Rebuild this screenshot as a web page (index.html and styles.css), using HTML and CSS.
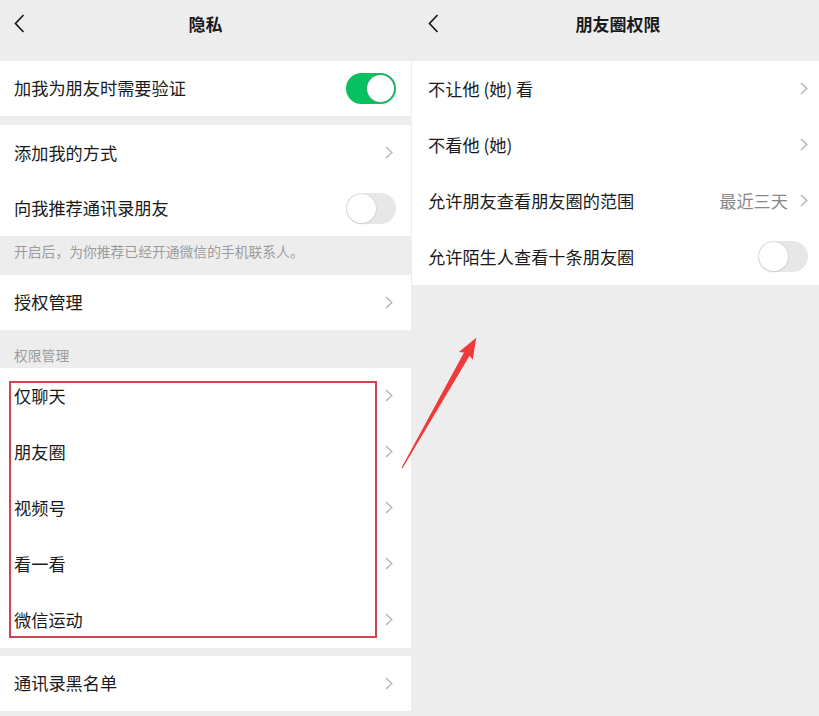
FILE: index.html
```html
<!DOCTYPE html>
<html lang="zh-CN">
<head>
<meta charset="utf-8">
<title>隐私 / 朋友圈权限</title>
<link rel="stylesheet" href="styles.css">
</head>
<body>
<div class="page">
  <section class="panel panel-left">
    <header class="header">
      <svg class="back" viewBox="0 0 11 19" width="11" height="19"><polyline points="9.5,1 1.5,9.5 9.5,18" fill="none" stroke="#1a1a1a" stroke-width="1.7"/></svg>
      <h1 class="title">隐私</h1>
    </header>

    <div class="group g1">
      <div class="row r55"><span class="label">加我为朋友时需要验证</span><span class="switch on"><span class="knob"></span></span></div>
    </div>

    <div class="group g2">
      <div class="row"><span class="label">添加我的方式</span><svg class="chev" viewBox="0 0 8 13" width="8" height="13"><polyline points="1,1 6.8,6.5 1,12" fill="none" stroke="#b5b5b5" stroke-width="1.4"/></svg></div>
      <div class="row r55"><span class="label">向我推荐通讯录朋友</span><span class="switch"><span class="knob"></span></span></div>
    </div>

    <p class="hint">开启后，为你推荐已经开通微信的手机联系人。</p>

    <div class="group">
      <div class="row r55"><span class="label">授权管理</span><svg class="chev" viewBox="0 0 8 13" width="8" height="13"><polyline points="1,1 6.8,6.5 1,12" fill="none" stroke="#b5b5b5" stroke-width="1.4"/></svg></div>
    </div>

    <p class="section-title">权限管理</p>

    <div class="group g4">
      <div class="row"><span class="label">仅聊天</span><svg class="chev" viewBox="0 0 8 13" width="8" height="13"><polyline points="1,1 6.8,6.5 1,12" fill="none" stroke="#b5b5b5" stroke-width="1.4"/></svg></div>
      <div class="row"><span class="label">朋友圈</span><svg class="chev" viewBox="0 0 8 13" width="8" height="13"><polyline points="1,1 6.8,6.5 1,12" fill="none" stroke="#b5b5b5" stroke-width="1.4"/></svg></div>
      <div class="row"><span class="label">视频号</span><svg class="chev" viewBox="0 0 8 13" width="8" height="13"><polyline points="1,1 6.8,6.5 1,12" fill="none" stroke="#b5b5b5" stroke-width="1.4"/></svg></div>
      <div class="row"><span class="label">看一看</span><svg class="chev" viewBox="0 0 8 13" width="8" height="13"><polyline points="1,1 6.8,6.5 1,12" fill="none" stroke="#b5b5b5" stroke-width="1.4"/></svg></div>
      <div class="row"><span class="label">微信运动</span><svg class="chev" viewBox="0 0 8 13" width="8" height="13"><polyline points="1,1 6.8,6.5 1,12" fill="none" stroke="#b5b5b5" stroke-width="1.4"/></svg></div>
      <div class="highlight"></div>
    </div>

    <div class="group g5">
      <div class="row r55"><span class="label">通讯录黑名单</span><svg class="chev" viewBox="0 0 8 13" width="8" height="13"><polyline points="1,1 6.8,6.5 1,12" fill="none" stroke="#b5b5b5" stroke-width="1.4"/></svg></div>
    </div>
  </section>

  <section class="panel panel-right">
    <header class="header">
      <svg class="back" viewBox="0 0 11 19" width="11" height="19"><polyline points="9.5,1 1.5,9.5 9.5,18" fill="none" stroke="#1a1a1a" stroke-width="1.7"/></svg>
      <h1 class="title">朋友圈权限</h1>
    </header>
    <div class="group g1">
      <div class="row"><span class="label">不让他 (她) 看</span><svg class="chev" viewBox="0 0 8 13" width="8" height="13"><polyline points="1,1 6.8,6.5 1,12" fill="none" stroke="#b5b5b5" stroke-width="1.4"/></svg></div>
      <div class="row"><span class="label">不看他 (她)</span><svg class="chev" viewBox="0 0 8 13" width="8" height="13"><polyline points="1,1 6.8,6.5 1,12" fill="none" stroke="#b5b5b5" stroke-width="1.4"/></svg></div>
      <div class="row"><span class="label">允许朋友查看朋友圈的范围</span><span class="value">最近三天</span><svg class="chev" viewBox="0 0 8 13" width="8" height="13"><polyline points="1,1 6.8,6.5 1,12" fill="none" stroke="#b5b5b5" stroke-width="1.4"/></svg></div>
      <div class="row"><span class="label">允许陌生人查看十条朋友圈</span><span class="switch"><span class="knob"></span></span></div>
    </div>
  </section>

  <svg class="arrow" viewBox="0 0 819 716" width="819" height="716">
    <g transform="translate(402,468) rotate(-60.35)">
      <polygon points="0,-0.6 131,-3.2 129,-8 150,0 129,8 131,3.2 0,0.6" fill="#ee3a3a"/>
    </g>
  </svg>
</div>
</body>
</html>
```

FILE: styles.css
```css
* { box-sizing: border-box; }
html, body { margin: 0; padding: 0; }
body {
  background: #ededed;
  font-family: "Noto Sans CJK SC", "Noto Sans", sans-serif;
  color: #1a1a1a;
  width: 819px;
  height: 716px;
  overflow: hidden;
}
.page {
  position: relative;
  display: flex;
  width: 819px;
  height: 716px;
}
.panel {
  display: flex;
  flex-direction: column;
  background: #ededed;
}
.panel-left { width: 411px; }
.panel-right { flex: 1; margin-left: 1px; }

.header {
  height: 61px;
  display: flex;
  align-items: flex-start;
  justify-content: center;
  position: relative;
}
.back {
  position: absolute;
  left: 14px;
  top: 14px;
}
.panel-right .back { left: 16px; }
.title {
  margin: 0;
  padding-top: 12px;
  font-size: 17px;
  font-weight: 700;
  line-height: 24px;
}
.panel-right .title { padding-left: 5px; }

.group {
  background: #fff;
  position: relative;
}
.row {
  height: 56px;
  display: flex;
  align-items: center;
  padding: 0 18px 1px 14px;
  font-size: 17.2px;
}
.row.r55 { height: 55px; }
.label { flex: 1; line-height: 24px; }
.chev { flex: none; }
.row .switch { margin-right: -3px; }

.panel-right .row { padding: 0 11px 1px 16px; }
.panel-right .row .switch { margin-right: 0; }
.value {
  color: #888;
  margin-right: 12px;
}

.g2 { margin-top: 9px; }
.g5 { margin-top: 8px; }

.hint {
  margin: 0;
  height: 39px;
  padding: 3px 14px 0;
  font-size: 13.8px;
  line-height: 24px;
  color: #9c9c9c;
}
.section-title {
  margin: 0;
  height: 38px;
  padding: 13px 14px 0;
  font-size: 13.8px;
  line-height: 24px;
  color: #9c9c9c;
}

.switch {
  flex: none;
  width: 50px;
  height: 31px;
  border-radius: 16px;
  background: #e7e7e7;
  position: relative;
}
.switch .knob {
  position: absolute;
  top: 1px;
  left: 1px;
  width: 29px;
  height: 29px;
  border-radius: 50%;
  background: #fff;
  box-shadow: 0 0 0 0.6px #d3d3d3, 0 1px 2px rgba(0,0,0,0.12);
}
.switch.on { background: #07c160; }
.switch.on .knob {
  left: auto;
  right: 2px;
  top: 2px;
  width: 27px;
  height: 27px;
  box-shadow: 0 0 0 0.6px #4a9a70;
}

.highlight {
  position: absolute;
  left: 9px;
  top: 13px;
  width: 368px;
  height: 257px;
  border: 2.5px solid #d3434d;
  pointer-events: none;
}

.arrow {
  position: absolute;
  left: 0;
  top: 0;
  pointer-events: none;
}
```
